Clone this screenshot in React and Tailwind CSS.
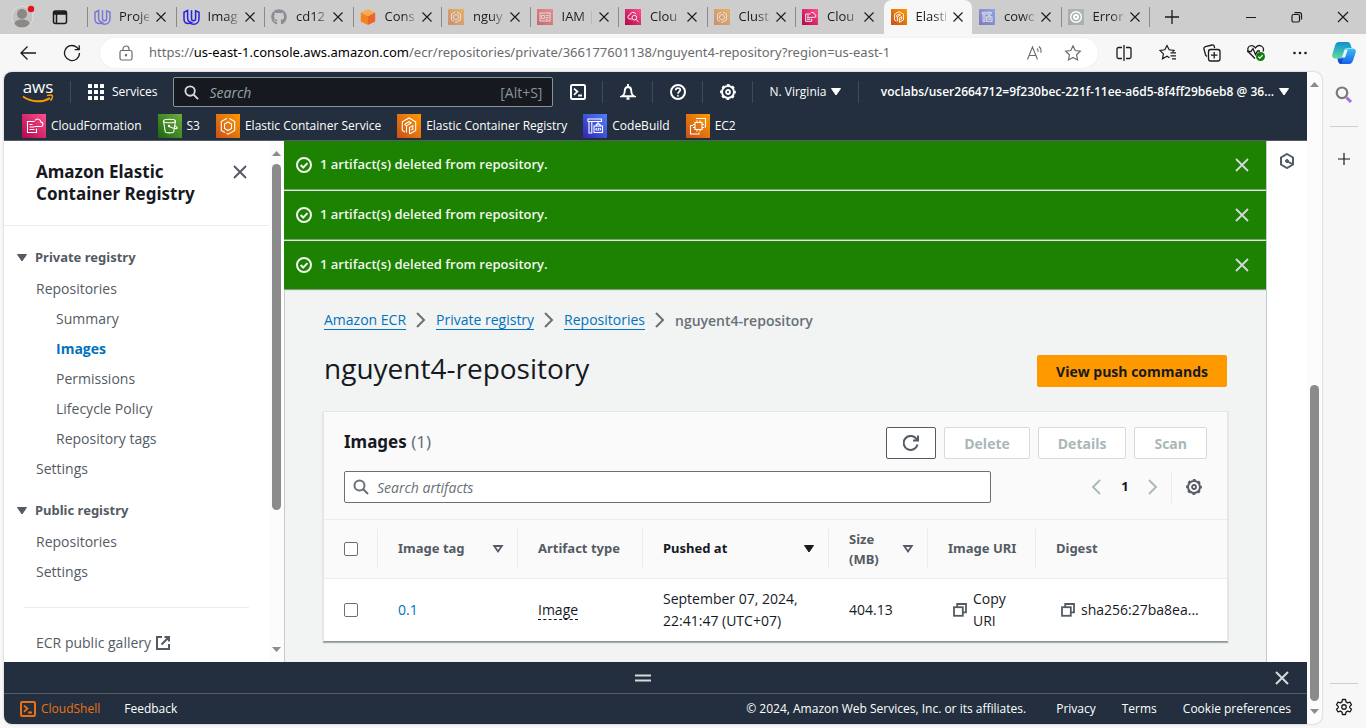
import React from "react";
import { FaGithub } from "react-icons/fa";

/* ---------- icon helpers ---------- */

function Svg({ size = 16, box = 16, sw = 2, className = "", children }) {
  return (
    <svg
      width={size}
      height={size}
      viewBox={`0 0 ${box} ${box}`}
      fill="none"
      stroke="currentColor"
      strokeWidth={sw}
      className={`shrink-0 ${className}`}
      aria-hidden="true"
    >
      {children}
    </svg>
  );
}

const Close = ({ size = 16, sw = 2, className }) => (
  <Svg size={size} sw={sw} className={className}>
    <path d="M2 2l12 12M14 2L2 14" />
  </Svg>
);

const Magnifier = ({ size = 16, className }) => (
  <Svg size={size} className={className}>
    <circle cx="6.5" cy="6.5" r="5" />
    <path d="M10.2 10.2l4.8 4.8" />
  </Svg>
);

const Caret = ({ open, className }) => (
  <Svg size={12} box={12} sw={open ? 1.8 : 1} className={className}>
    {open ? <path d="M2.200 3h7.600L6 8.400z" /> : <path d="M1.500 2.500h9L6 9z" fill="currentColor" />}
  </Svg>
);

const Gear = ({ className }) => (
  <Svg className={className}>
    <circle cx="8" cy="8" r="6" strokeWidth="2" />
    <circle cx="8" cy="8" r="7.2" strokeWidth="1.4" strokeDasharray="2.83 2.83" strokeDashoffset="1.4" />
    <circle cx="8" cy="8" r="2" strokeWidth="1.8" />
  </Svg>
);

const Terminal = ({ className }) => (
  <Svg className={className}>
    <rect x="1" y="1" width="14" height="14" rx="1.2" />
    <path d="M4 4.6l3.4 3L4 10.8M8.2 11.5H12" strokeWidth="1.8" />
  </Svg>
);

const CheckCircle = () => (
  <Svg>
    <circle cx="8" cy="8" r="7" />
    <path d="M4.6 8l2.6 2.5 4.3-4.4" />
  </Svg>
);

const CopyIcon = () => (
  <Svg size={14} box={14} sw={1.8} className="text-[#545b64]">
    <path d="M4.2 4V1h8.8v8.4h-3" />
    <rect x="1" y="4.2" width="8.8" height="8.6" />
  </Svg>
);

const AwsLogo = () => (
  <span className="flex flex-col items-center text-white">
    <span className="text-[17px] font-medium leading-[14px]">aws</span>
    <svg width="32" height="10" viewBox="0 0 32 10" fill="none" aria-hidden="true">
      <path d="M1 2.5c8.5 6 19.5 6.2 27 1.6" stroke="#ff9900" strokeWidth="2" />
      <path d="M25 1.6c2-.8 4.8-.8 5.3 0 .5.9-.3 3.600-1.900 5" stroke="#ff9900" strokeWidth="1.5" />
    </svg>
  </span>
);

/* ---------- service tiles ---------- */

const TILE_COLOURS = {
  orange: ["#c8511b", "#ff9900"],
  pink: ["#b0084d", "#ff4f8b"],
  green: ["#1b660f", "#6cae3e"],
  blue: ["#2e27ad", "#527fff"],
  red: ["#bd0816", "#ff5252"],
  grey: ["#a3aba6", "#b0b8b3"],
};

const GLYPHS = {
  formation: (
    <>
      <path d="M12.500 7.500H5.500v11h9v-4M7.500 10.500h3M7.500 13h5M7.500 15.500h5" />
      <path d="M12.500 12.500h6a2.200 2.200 0 0 0 .4-4.400 3.300 3.300 0 0 0-6-1.600" />
    </>
  ),
  s3: (
    <>
      <ellipse cx="11.500" cy="7" rx="6" ry="1.800" />
      <path d="M5.500 7l1.700 10.500c.2 1.800 8.400 1.800 8.600 0L17.500 7M10.500 12.200c3.500 1.800 6.800 2.600 8.400 2.300 1-.6-.7-2-2-2.700" />
      <circle cx="11" cy="12" r=".6" />
    </>
  ),
  ecs: (
    <>
      <path d="M11 4.300L5.300 7.600v8.800L9 18.500M13.500 4.600l5.200 3v8.800L12 20.200l-1.500-.9" />
      <path d="M12 8l-3.500 2v4.500l3.500 2 3.500-2V10z" />
    </>
  ),
  ecr: (
    <>
      <path d="M8 18L5.300 16.400V7.800L12 4l6.700 3.800v8.600L12.500 20" />
      <path d="M12.500 20v-6.500l3.300-1.900v3.600l-1.600.9M9.500 18.500v-6.700l4.300-2.500M9.500 11.800L8 11v-1l4-2.300 2.500 1.400" />
    </>
  ),
  build: (
    <>
      <path d="M5 5h13.500v2.500H5zM6 7.500V19h2.800V7.500M15 7.500V10" />
      <rect x="11" y="12" width="8.500" height="6.500" />
      <path d="M13 12c0-2.800 4.500-2.800 4.500 0M13.800 14l-1 1.300 1 1.200M16.800 14l1 1.300-1 1.200M15.700 13.800l-.8 3" />
    </>
  ),
  ec2: (
    <>
      <rect x="9" y="8.500" width="7" height="7" />
      <path d="M11 6.500v2M14 6.500v2M11 15.500v2M14 15.500v2M7 10.500h2M7 13.500h2M16 10.500h2M16 13.500h2" />
      <path d="M10.500 5V4.500h9V13h-1M7 11.500H4.500v8.500H13V18.500" />
    </>
  ),
  watch: (
    <>
      <path d="M10 15H7.500a3 3 0 0 1-.3-6 5 5 0 0 1 9.300-1.200" />
      <circle cx="14" cy="13" r="3.500" />
      <path d="M16.600 15.600l3.400 3.600" />
    </>
  ),
  iam: (
    <>
      <rect x="4.500" y="6" width="15" height="12" />
      <path d="M7 9.500h4v5H7zM13 10h4.500M13 13h4.500M13 15.500h3" />
    </>
  ),
  target: (
    <>
      <circle cx="12" cy="12" r="8" strokeWidth="2.200" />
      <circle cx="12" cy="12" r="3" strokeWidth="3" />
    </>
  ),
};

function Tile({ colour, glyph, size = 24, faded, id }) {
  const [from, to] = TILE_COLOURS[colour];
  return (
    <svg
      width={size}
      height={size}
      viewBox="0 0 24 24"
      className={`shrink-0 ${faded ? "opacity-50" : ""}`}
      aria-hidden="true"
    >
      <defs>
        <linearGradient id={id} x1="0" y1="1" x2="1" y2="0">
          <stop offset="0" stopColor={from} />
          <stop offset="1" stopColor={to} />
        </linearGradient>
      </defs>
      <rect width="24" height="24" fill={`url(#${id})`} />
      <g fill="none" stroke="#fff" strokeWidth={size < 20 ? 1.4 : 1.1}>
        {GLYPHS[glyph]}
      </g>
    </svg>
  );
}

const UMark = ({ faded }) => (
  <svg width="17" height="16" viewBox="0 0 17 16" fill="none" stroke="#2b21e0" strokeWidth="1.500" className={`shrink-0 ${faded ? "opacity-50" : ""}`} aria-hidden="true">
    <path d="M8.500 1.200v8.300c0 1.300.9 2.300 2.100 2.300s2-1 2-2.300V1.900l3.400 1.400v6.200c0 3.400-2.300 5.700-5.400 5.700-1.600 0-3-.5-4-1.500" />
    <path d="M4.600 1.500L1 3.300v6.900c0 2.800 2 4.300 4.600 4.300 1.200 0 2.200-.3 3-.8C6 13 4.600 11.700 4.600 9.300z" />
  </svg>
);

const Cube = () => (
  <svg width="16" height="16" viewBox="0 0 16 16" className="shrink-0" aria-hidden="true">
    <path d="M8 0l7.200 3.600L8 7.200.8 3.600z" fill="#fbab4d" />
    <path d="M.8 3.600L8 7.200V16L.8 12.400z" fill="#f58220" />
    <path d="M15.200 3.600L8 7.200V16l7.200-3.600z" fill="#e9652a" />
  </svg>
);

/* ---------- browser frame ---------- */

const TABS = [
  { label: "Proje", icon: <UMark faded /> },
  { label: "Imag", icon: <UMark /> },
  { label: "cd12", icon: <FaGithub size={16} className="shrink-0 text-[#8b8f94]" /> },
  { label: "Cons", icon: <Cube /> },
  { label: "nguy", icon: <Tile id="t1" colour="orange" glyph="ecs" size={16} faded /> },
  { label: "IAM |", icon: <Tile id="t2" colour="red" glyph="iam" size={16} faded /> },
  { label: "Clou", icon: <Tile id="t3" colour="pink" glyph="watch" size={16} /> },
  { label: "Clust", icon: <Tile id="t4" colour="orange" glyph="ecs" size={16} faded /> },
  { label: "Clou", icon: <Tile id="t5" colour="pink" glyph="formation" size={16} /> },
  { label: "Elasti", icon: <Tile id="t6" colour="orange" glyph="ecr" size={16} />, active: true },
  { label: "cowo", icon: <Tile id="t7" colour="blue" glyph="build" size={16} faded /> },
  { label: "Error", icon: <Tile id="t8" colour="grey" glyph="target" size={16} /> },
];

function Tab({ label, icon, active, divider }) {
  return (
    <div className={`flex h-full flex-1 items-center ${active ? "rounded-t-lg bg-[#f7f7f7]" : ""}`}>
      <span className={`h-5 w-px ${divider ? "bg-[#8a8a8a]" : ""}`} />
      <span className="ml-1.5 flex w-[17px]">{icon}</span>
      <span className="ml-2 w-[30px] whitespace-nowrap text-[13px] text-[#1b1b1b] [mask-image:linear-gradient(to_right,black_60%,#0004)]">
        {label}
      </span>
      <button aria-label={`Close ${label}`} className="ml-1.5 flex text-[#1b1b1b]">
        <Close size={12} sw={1.5} />
      </button>
    </div>
  );
}

function TabStrip() {
  return (
    <div className="flex h-[34px] shrink-0 items-center bg-[#cdcdcd]">
      <button aria-label="Profile" className="ml-3 flex">
        <svg width="24" height="24" viewBox="0 0 24 24" aria-hidden="true">
          <circle cx="10.500" cy="12" r="10.500" fill="#c4c2c0" stroke="#dedede" />
          <circle cx="10" cy="9" r="5" fill="#8c8886" />
          <path d="M2.500 19c0-3 3-4.500 7.500-4.500s7.500 1.500 7.500 4.500c-2 2.500-4.500 3.500-7.500 3.500S4.500 21.500 2.500 19z" fill="#8c8886" />
          <circle cx="19" cy="4" r="3.200" fill="#e3121b" />
        </svg>
      </button>
      <button aria-label="Tab actions" className="ml-4 mr-[19px] flex text-[#1b1b1b]">
        <Svg sw={1.5}>
          <rect x="1.500" y="2" width="13" height="12.500" rx="2" />
          <path d="M1.500 4h13" strokeWidth="3.500" />
          <path d="M4.500 5v9" />
        </Svg>
      </button>
      <div className="flex h-full max-w-[1062px] flex-1">
        {TABS.map((t, i) => (
          <Tab key={i} {...t} divider={!t.active && !(TABS[i - 1] && TABS[i - 1].active)} />
        ))}
      </div>
      <span className="h-5 w-px bg-[#8a8a8a]" />
      <button aria-label="New tab" className="ml-3.5 flex text-[#1b1b1b]">
        <Svg sw={1.3}>
          <path d="M8 1v14M1 8h14" />
        </Svg>
      </button>
      <div className="ml-auto mr-4 flex items-center gap-8 text-[#1b1b1b]">
        <button aria-label="Minimize" className="flex">
          <Svg size={14} box={14} sw={1}>
            <path d="M2 7.500h10" />
          </Svg>
        </button>
        <button aria-label="Restore" className="flex">
          <Svg size={14} box={14} sw={1.200}>
            <rect x="2" y="4.500" width="7.500" height="7.500" rx="1.500" />
            <path d="M4.500 2.600h5a2 2 0 0 1 2 2v5" />
          </Svg>
        </button>
        <button aria-label="Close window" className="flex">
          <Svg size={14} box={14} sw={1.200}>
            <path d="M2 2l10 10M12 2L2 12" />
          </Svg>
        </button>
      </div>
    </div>
  );
}

function ToolButton({ label, children }) {
  return (
    <button aria-label={label} className="flex w-11 shrink-0 justify-center">
      {children}
    </button>
  );
}

const STAR = "M9 1.800l2.200 4.700 5.100.7-3.700 3.600.9 5.100L9 13.400l-4.500 2.500.9-5.100L1.700 7.200l5.100-.7z";

function Toolbar() {
  return (
    <div className="flex h-[38px] shrink-0 items-center bg-[#f7f7f7] pl-1.5 text-[#1b1b1b]">
      <ToolButton label="Back">
        <Svg sw={1.300}>
          <path d="M16 8H1M7.500 1.500L1 8l6.500 6.500" />
        </Svg>
      </ToolButton>
      <ToolButton label="Refresh">
        <Svg size={18} box={18} sw={1.300}>
          <path d="M16.500 9a7.500 7.500 0 1 1-2.800-5.800L16 5.500M16.200 1.200v4.500h-4.500" />
        </Svg>
      </ToolButton>
      <div className="ml-1.5 mr-1 flex h-[30px] min-w-0 flex-1 items-center rounded-full bg-white pl-[18px] pr-4 text-[#6b6b6b] shadow-[0_0_2px_rgba(0,0,0,0.08)]">
        <Svg sw={1.200}>
          <rect x="2" y="5.500" width="12" height="9.500" rx="1.800" />
          <path d="M5 5.500V4a3 3 0 0 1 6 0v1.500" />
          <circle cx="8" cy="10.200" r=".6" fill="currentColor" />
        </Svg>
        <span className="ml-[15px] flex-1 overflow-hidden whitespace-nowrap font-['Noto_Sans',sans-serif] text-[13px]">
          https://<span className="text-black">us-east-1.console.aws.amazon.com</span>
          /ecr/repositories/private/366177601138/nguyent4-repository?region=us-east-1
        </span>
        <button aria-label="Read aloud" className="flex">
          <Svg size={18} box={18} sw={1.100}>
            <path d="M1.500 15.500L6.500 3l5 12.500M3.200 11.500h6.600M11 4.500c1 .8 1.300 2 1 3.300M12.800 2.500c2 1.500 2.600 4 2 6.300" />
          </Svg>
        </button>
        <button aria-label="Add to favorites" className="ml-5 flex">
          <Svg size={18} box={18} sw={1.200}>
            <path d={STAR} />
          </Svg>
        </button>
      </div>
      <ToolButton label="Split screen">
        <Svg sw={1.300}>
          <path d="M6 2.500H2.500a1.500 1.500 0 0 0-1.500 1.500v8a1.500 1.500 0 0 0 1.500 1.500H6M10 2.500h3.500A1.500 1.500 0 0 1 15 4v8a1.500 1.500 0 0 1-1.500 1.500H10M8 0v16" />
        </Svg>
      </ToolButton>
      <ToolButton label="Favorites">
        <Svg size={18} box={18} sw={1.200}>
          <path d="M10.500 13.700L8 12.200l-4.500 2.600.9-4.900L1 6.500l4.800-.7L8 1.500l2.200 4.300 4.800.7-1.300 1.300M11.500 8.800H17M11.500 11.800H17M13 14.800h4" />
        </Svg>
      </ToolButton>
      <ToolButton label="Collections">
        <Svg size={18} box={18} sw={1.300}>
          <path d="M4 12.500l-1.500-1.500L1 5c-.3-1 .3-2 1.500-2.400L9 1c1-.2 2 .3 2.300 1.300L11.600 4" />
          <rect x="5.500" y="5.500" width="11.500" height="11.500" rx="2.200" />
          <path d="M11.200 8v6.500M8 11.200h6.500" />
        </Svg>
      </ToolButton>
      <ToolButton label="Browser essentials">
        <Svg size={20} box={20} sw={1.300}>
          <path d="M9 15.500L3 9.500C1 7 1.500 4 4 3s4.300 0 5.500 1.800C10.700 3 13 2 15.200 3s3 3.500 1.800 5.500" />
          <path d="M1 8.500h4l2-3 2.500 6 2-3.500H14" />
          <circle cx="14.500" cy="13.500" r="4.500" fill="#107c10" stroke="none" />
          <path d="M12.300 13.600l1.500 1.500 2.800-2.900" stroke="#fff" />
        </Svg>
      </ToolButton>
      <ToolButton label="Settings and more">
        <svg width="16" height="16" viewBox="0 0 16 16" fill="currentColor" aria-hidden="true">
          <circle cx="2.500" cy="8" r="1.300" />
          <circle cx="8" cy="8" r="1.300" />
          <circle cx="13.500" cy="8" r="1.300" />
        </svg>
      </ToolButton>
      <ToolButton label="Copilot">
        <svg width="24" height="24" viewBox="0 0 24 24" aria-hidden="true">
          <defs>
            <linearGradient id="cp1" x1="0" y1="0" x2="0" y2="1">
              <stop offset="0" stopColor="#0d8fd6" />
              <stop offset="1" stopColor="#5fdc9a" />
            </linearGradient>
            <linearGradient id="cp2" x1="0" y1="0" x2="0" y2="1">
              <stop offset="0" stopColor="#35c1f1" />
              <stop offset="1" stopColor="#1b5fe8" />
            </linearGradient>
          </defs>
          <path d="M7 1h8.500c1.800 0 2.600 1.300 3.200 3l1 3h-4.500c-1.500 0-2.300.8-2.800 2.200L10.500 15c-.5 1.500-1.200 2.500-3 2.500H3C.8 17.500-.2 15.800.3 13.500L3.200 4C3.800 2.200 5 1 7 1z" fill="url(#cp1)" />
          <path d="M13 7.500h7.500c2.500 0 3.800 1.500 3.200 4l-2.700 8c-.6 1.900-1.900 3.500-4 3.500H9c-1.800 0-2.400-1.300-3-3l-.5-2.500H8c1.500 0 2.200-1 2.700-2.500z" fill="url(#cp2)" />
          <path d="M12.800 8.500h3L13 16.500h-3z" fill="#eef8ff" />
          <path d="M5.500 17.500H11L9.500 23C7 23 6 20.500 5.500 17.500z" fill="#1339c9" opacity=".7" />
        </svg>
      </ToolButton>
    </div>
  );
}

function EdgeRail() {
  return (
    <aside className="flex w-11 shrink-0 flex-col items-center text-[#1b1b1b]">
      <button aria-label="Search sidebar" className="mt-3.5 flex">
        <svg width="18" height="18" viewBox="0 0 18 18" fill="none" aria-hidden="true">
          <circle cx="7" cy="6.800" r="5.300" stroke="#7a7a7a" strokeWidth="2.200" />
          <path d="M11.500 11.500L16 16" stroke="#a56cdb" strokeWidth="3" />
        </svg>
      </button>
      <span className="mt-[22px] h-px w-7 bg-[#cfcfcf]" />
      <button aria-label="Customize" className="mt-6 flex">
        <Svg sw={1.200}>
          <path d="M8 2v12M2 8h12" />
        </Svg>
      </button>
      <span className="mt-auto h-px w-7 bg-[#cfcfcf]" />
      <button aria-label="Sidebar settings" className="mb-2 mt-3.5 flex">
        <Svg size={18} box={24} sw={1.700}>
          <circle cx="12" cy="12" r="3" />
          <path d="M10 2h4l.7 3.200 2.200 1.300L20 5.500l2 3.500-2.400 2.200v1.600L22 15l-2 3.500-3.100-1-2.200 1.300L14 22h-4l-.7-3.200-2.200-1.300-3.100 1L2 15l2.400-2.200v-1.600L2 9l2-3.500 3.100 1 2.200-1.300z" strokeLinejoin="round" />
        </Svg>
      </button>
    </aside>
  );
}

function ScrollArrow({ down }) {
  return (
    <svg width="9" height="5" viewBox="0 0 9 5" className="shrink-0" fill="#8b8b8b" aria-hidden="true">
      {down ? <path d="M0 0h9L4.500 5z" /> : <path d="M0 5h9L4.500 0z" />}
    </svg>
  );
}

/* ---------- AWS console ---------- */

const FAVOURITES = [
  { label: "CloudFormation", colour: "pink", glyph: "formation" },
  { label: "S3", colour: "green", glyph: "s3" },
  { label: "Elastic Container Service", colour: "orange", glyph: "ecs" },
  { label: "Elastic Container Registry", colour: "orange", glyph: "ecr" },
  { label: "CodeBuild", colour: "blue", glyph: "build" },
  { label: "EC2", colour: "orange", glyph: "ec2" },
];

function NavIcon({ label, children }) {
  return (
    <button aria-label={label} className="flex h-[22px] w-[50px] shrink-0 items-center justify-center border-r border-[#3f4a58]">
      {children}
    </button>
  );
}

function ConsoleHeader() {
  return (
    <header className="shrink-0 border-b border-[#545b64] bg-[#232f3e] text-[12px] font-medium text-white">
      <div className="flex h-10 items-center whitespace-nowrap pl-[18px] pr-[17px]">
        <a href="#home" aria-label="AWS home" className="flex w-8">
          <AwsLogo />
        </a>
        <span className="ml-4 h-[22px] w-px bg-[#3f4a58]" />
        <button className="ml-[17px] flex items-center gap-2">
          <svg width="16" height="16" viewBox="0 0 16 16" fill="currentColor" aria-hidden="true">
            {[0, 6, 12].map((y) => [0, 6, 12].map((x) => <rect key={`${x}-${y}`} x={x} y={y} width="4" height="4" rx=".6" />))}
          </svg>
          Services
        </button>
        <label className="ml-4 flex h-[30px] w-[380px] items-center rounded-[2px] border border-[#879596] bg-[#16191f] px-2.5 text-[14px] font-normal">
          <Magnifier size={15} className="text-[#d5dbdb]" />
          <input type="text" aria-label="Search" placeholder="Search" className="ml-2.5 w-full min-w-0 bg-transparent italic outline-none placeholder:text-[#95a5a6]" />
          <span className="text-[#879596]">[Alt+S]</span>
        </label>
        <NavIcon label="CloudShell">
          <Terminal />
        </NavIcon>
        <NavIcon label="Notifications">
          <Svg>
            <path d="M8 0v2.500M3.500 11c1-1.200 1.300-2 1.300-4.500 0-2 1.300-3.500 3.200-3.500s3.200 1.500 3.200 3.500c0 2.500.3 3.300 1.300 4.500.6.700 1 .9 1.500 1.200H2c.5-.3.900-.5 1.500-1.200z" strokeWidth="1.900" />
            <path d="M6.500 14.500h3" strokeWidth="2.600" />
          </Svg>
        </NavIcon>
        <NavIcon label="Help">
          <Svg>
            <circle cx="8" cy="8" r="7" />
            <path d="M5.700 6.300c0-1.400 1-2.200 2.300-2.200s2.300.8 2.300 2C10.300 7.600 8 7.700 8 9.700" strokeWidth="1.700" />
            <circle cx="8" cy="11.800" r=".6" strokeWidth="1" />
          </Svg>
        </NavIcon>
        <NavIcon label="Settings">
          <Gear />
        </NavIcon>
        <button className="ml-4 flex items-center">
          N. Virginia
          <Caret className="ml-1" />
        </button>
        <span className="ml-4 h-[22px] w-px bg-[#3f4a58]" />
        <button className="ml-auto flex items-center font-semibold">
          <span>voclabs/user2664712=9f230bec-221f-11ee-a6d5-8f4ff29b6eb8 @ 36...</span>
          <Caret className="ml-1" />
        </button>
      </div>
      <nav className="flex h-7 items-center gap-4 whitespace-nowrap pl-[18px]">
        {FAVOURITES.map((f) => (
          <a key={f.label} href={`#${f.glyph}`} className="flex items-center gap-[5px]">
            <Tile id={`f-${f.glyph}`} colour={f.colour} glyph={f.glyph} />
            {f.label}
          </a>
        ))}
      </nav>
    </header>
  );
}

const NAV = [
  {
    title: "Private registry",
    items: [
      { label: "Repositories" },
      { label: "Summary", sub: true },
      { label: "Images", sub: true, active: true },
      { label: "Permissions", sub: true },
      { label: "Lifecycle Policy", sub: true },
      { label: "Repository tags", sub: true },
      { label: "Settings" },
    ],
  },
  { title: "Public registry", items: [{ label: "Repositories" }, { label: "Settings" }] },
];

function SideNav() {
  return (
    <aside className="flex w-[280px] shrink-0 bg-white">
      <div className="flex-1 overflow-hidden text-[14px] text-[#545b64]">
        <div className="flex h-[85px] justify-between border-b border-[#eaeded] pl-8 pr-[21px] pt-5">
          <h2 className="w-44 font-['Noto_Sans',sans-serif] text-[17px] font-bold leading-[22px] text-[#16191f]">Amazon Elastic Container Registry</h2>
          <button aria-label="Close navigation" className="mt-[3px] flex h-4">
            <Close />
          </button>
        </div>
        <div className="pt-[17px]">
          {NAV.map((group, gi) => (
            <div key={group.title} className={gi ? "mt-[13px]" : ""}>
              <button className="flex h-[30px] items-center pl-3 font-['Noto_Sans',sans-serif] text-[13px] font-bold">
                <Caret className="mr-[7px]" />
                {group.title}
              </button>
              <ul>
                {group.items.map((item) => (
                  <li key={item.label} className={`flex h-[30px] items-center ${item.sub ? "pl-[52px]" : "pl-8"}`}>
                    <a href={`#${item.label}`} className={item.active ? "font-bold text-[#0073bb]" : ""}>
                      {item.label}
                    </a>
                  </li>
                ))}
              </ul>
            </div>
          ))}
          <hr className="mx-5 mt-[21px] border-[#eaeded]" />
          <a href="#gallery" className="mt-6 flex items-center pl-8">
            ECR public gallery
            <Svg size={14} box={14} className="ml-[5px]">
              <path d="M6 1H1v12h12V8M8.500 1H13v4.500M13 1L5.500 8.500" />
            </Svg>
          </a>
        </div>
      </div>
      <div className="flex w-[15px] shrink-0 flex-col items-center bg-[#fcfcfc] py-2.5">
        <ScrollArrow />
        <span className="mt-2 h-[346px] w-[9px] rounded-full bg-[#8b8b8b]" />
        <span className="mt-auto">
          <ScrollArrow down />
        </span>
      </div>
    </aside>
  );
}

function Flash() {
  return (
    <div className="flex h-[50px] items-center justify-between border-b border-[#e3e6e3] bg-[#1d8102] px-3 pb-px pr-4 text-[13px] font-semibold text-[#f2f8f0] shadow-[inset_0_-1px_0_#7f9f7a]">
      <span className="flex items-center gap-2">
        <CheckCircle />1 artifact(s) deleted from repository.
      </span>
      <button aria-label="Dismiss" className="flex text-[#d5dbdb]">
        <Close sw={1.800} />
      </button>
    </div>
  );
}

function Breadcrumbs() {
  const links = ["Amazon ECR", "Private registry", "Repositories"];
  return (
    <nav className="flex h-5 items-center text-[14px]">
      {links.map((l) => (
        <React.Fragment key={l}>
          <a href={`#${l}`} className="border-b border-[#0073bb] leading-[18px] text-[#0073bb]">
            {l}
          </a>
          <Svg className="mx-[7px] text-[#687078]">
            <path d="M4 1l7 7-7 7" />
          </Svg>
        </React.Fragment>
      ))}
      <span className="font-semibold text-[#687078]">nguyent4-repository</span>
    </nav>
  );
}

function ActionButton({ children }) {
  return (
    <button disabled className="h-8 rounded-[2px] border border-[#d5dbdb] bg-white px-[19px] text-[14px] font-bold text-[#aab7b8]">
      {children}
    </button>
  );
}

function HeadCell({ children, first, sort, strong }) {
  return (
    <th scope="col" className="h-[59px] p-0 text-left font-['Noto_Sans',sans-serif] text-[13px] font-bold">
      <div className={`flex h-10 items-center justify-between pr-[13px] ${first ? "pl-5" : "border-l border-[#eaeded] pl-5"} ${strong ? "text-[#16191f]" : "text-[#545b64]"}`}>
        {children}
        {sort && <Caret open={sort === "open"} />}
      </div>
    </th>
  );
}

const Check = ({ label }) => (
  <input
    type="checkbox"
    aria-label={label}
    className="block h-3.5 w-3.5 appearance-none rounded-[2px] border border-[#687078] bg-white"
  />
);

function ImagesCard() {
  return (
    <section className="-mx-px mt-6 border border-[#e3e7e7] border-b-[#879596] bg-[#fafafa] shadow-[0_1px_1px_rgba(0,28,36,0.3)]">
      <div className="px-5 pb-4 pt-[15px]">
        <div className="flex items-center gap-2">
          <h2 className="mb-0.5 mr-auto font-['Noto_Sans',sans-serif] text-[17px] font-bold leading-6 text-[#16191f]">
            Images <span className="font-normal text-[#687078]">(1)</span>
          </h2>
          <button aria-label="Refresh" className="flex h-8 w-[50px] items-center justify-center rounded-[2px] border border-[#545b64] bg-white text-[#545b64]">
            <Svg>
              <path d="M14.500 9.500A7 7 0 1 1 13.500 4l1 1.200M15 .500v5h-5" />
            </Svg>
          </button>
          <ActionButton>Delete</ActionButton>
          <ActionButton>Details</ActionButton>
          <ActionButton>Scan</ActionButton>
        </div>
        <div className="mt-3 flex items-center">
          <label className="flex h-8 w-3/4 items-center rounded-[2px] border border-[#687078] bg-white px-2 text-[14px] text-[#687078]">
            <Magnifier />
            <input type="text" aria-label="Search artifacts" placeholder="Search artifacts" className="ml-2 w-full bg-transparent italic outline-none placeholder:text-[#687078]" />
          </label>
          <div className="ml-auto flex items-center text-[#aab7b8]">
            <button aria-label="Previous page" className="flex">
              <Svg sw={1.800}>
                <path d="M11 1L4 8l7 7" />
              </Svg>
            </button>
            <span className="w-10 text-center text-[13px] font-bold text-[#16191f]">1</span>
            <button aria-label="Next page" className="flex">
              <Svg sw={1.800}>
                <path d="M4 1l7 7-7 7" />
              </Svg>
            </button>
            <button aria-label="Preferences" className="ml-2.5 flex h-8 items-center border-l border-[#eaeded] pl-3.5 pr-[5px] text-[#545b64]">
              <Gear />
            </button>
          </div>
        </div>
      </div>
      <table className="w-full table-fixed border-t border-[#eaeded] text-[14px] text-[#16191f]">
        <colgroup>
          <col className="w-[53px]" />
          <col className="w-[140px]" />
          <col className="w-[125px]" />
          <col className="w-[186px]" />
          <col className="w-[99px]" />
          <col className="w-[108px]" />
          <col />
        </colgroup>
        <thead>
          <tr className="border-b border-[#eaeded]">
            <HeadCell first>
              <Check label="Select all images" />
            </HeadCell>
            <HeadCell sort="open">Image tag</HeadCell>
            <HeadCell>Artifact type</HeadCell>
            <HeadCell sort="down" strong>
              Pushed at
            </HeadCell>
            <HeadCell sort="open">
              <span className="leading-5">
                Size
                <br />
                (MB)
              </span>
            </HeadCell>
            <HeadCell>Image URI</HeadCell>
            <HeadCell>Digest</HeadCell>
          </tr>
        </thead>
        <tbody>
          <tr className="h-[62px] bg-white leading-[22px]">
            <td className="pl-5">
              <Check label="Select image 0.1" />
            </td>
            <td className="pl-[21px]">
              <a href="#0.1" className="text-[#0073bb]">
                0.1
              </a>
            </td>
            <td className="pl-[21px]">
              <span className="border-b border-dashed border-[#16191f] leading-4">Image</span>
            </td>
            <td className="whitespace-nowrap pl-[21px]">
              September 07, 2024,
              <br />
              22:41:47 (UTC+07)
            </td>
            <td className="pl-[21px]">404.13</td>
            <td className="pl-[26px]">
              <button className="flex items-center gap-1.5 text-left">
                <CopyIcon />
                <span>
                  Copy
                  <br />
                  URI
                </span>
              </button>
            </td>
            <td className="pl-[26px]">
              <button className="flex items-center gap-1.5">
                <CopyIcon />
                sha256:27ba8ea...
              </button>
            </td>
          </tr>
        </tbody>
      </table>
    </section>
  );
}

function ConsoleFooter() {
  return (
    <footer className="shrink-0 bg-[#232f3e] text-[12px] font-medium text-white">
      <div className="flex h-[31px] items-center pl-2 pr-[17px] text-[#d5dbdb]">
        <button aria-label="Resize panel" className="flex flex-1 justify-center">
          <Svg>
            <path d="M0 5.500h16M0 10.500h16" />
          </Svg>
        </button>
        <button aria-label="Close panel" className="flex">
          <Close />
        </button>
      </div>
      <div className="flex h-[31px] items-center whitespace-nowrap border-t border-[#545b64] px-4">
        <button className="flex items-center gap-[5px] text-[#ec7211]">
          <Terminal />
          CloudShell
        </button>
        <a href="#feedback" className="ml-6">
          Feedback
        </a>
        <span className="ml-auto">© 2024, Amazon Web Services, Inc. or its affiliates.</span>
        <a href="#privacy" className="ml-[30px]">
          Privacy
        </a>
        <a href="#terms" className="ml-[26px]">
          Terms
        </a>
        <a href="#cookies" className="ml-[26px]">
          Cookie preferences
        </a>
      </div>
    </footer>
  );
}

export default function App() {
  return (
    <div className="flex h-screen flex-col overflow-hidden bg-[#f7f7f7] font-['Open_Sans',sans-serif]">
      <TabStrip />
      <Toolbar />
      <div className="flex min-h-0 flex-1 pb-1 pl-1">
        <div className="flex min-w-0 flex-1 overflow-hidden rounded-lg bg-[#fcfcfc] shadow-[0_0_2px_rgba(0,0,0,0.3)]">
          <div className="flex min-w-0 flex-1 flex-col">
            <ConsoleHeader />
            <div className="flex min-h-0 flex-1">
              <SideNav />
              <main className="min-w-0 flex-1 overflow-hidden border-r border-[#c6cccc] bg-[#f2f3f3]">
                <Flash />
                <Flash />
                <Flash />
                <div className="border-l border-[#c6cccc] px-[39px] pb-10 pt-[19px]">
                  <Breadcrumbs />
                  <div className="mt-[25px] flex items-center justify-between">
                    <h1 className="mb-1.5 text-[28px] leading-[26px] text-[#16191f]">nguyent4-repository</h1>
                    <button className="h-8 rounded-[2px] bg-[#ff9900] px-[19px] text-[14px] font-bold text-[#16191f]">View push commands</button>
                  </div>
                  <ImagesCard />
                </div>
              </main>
              <aside className="flex w-10 shrink-0 justify-center bg-white pt-3">
                <button aria-label="Open help panel" className="flex h-4 text-[#545b64]">
                  <Svg>
                    <path d="M8 1l6 3.500v7L8 15l-6-3.500v-7z" />
                    <circle cx="8" cy="8" r="1.500" fill="currentColor" strokeWidth="1" />
                    <path d="M8 8l5 3" />
                  </Svg>
                </button>
              </aside>
            </div>
            <ConsoleFooter />
          </div>
          <div className="flex w-[15px] shrink-0 flex-col items-center py-2.5">
            <ScrollArrow />
            <span className="mt-auto h-[316px] w-[9px] rounded-full bg-[#8b8b8b]" />
            <span className="mt-2">
              <ScrollArrow down />
            </span>
          </div>
        </div>
        <EdgeRail />
      </div>
    </div>
  );
}
